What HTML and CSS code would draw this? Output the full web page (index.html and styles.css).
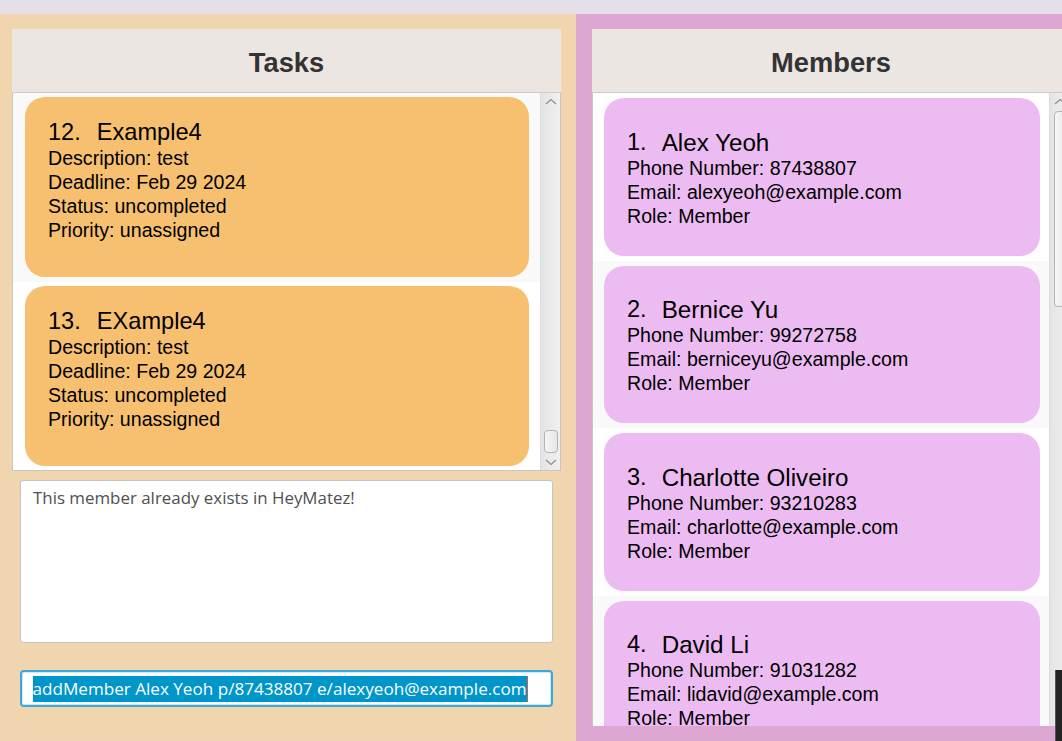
FILE: index.html
```html
<!DOCTYPE html>
<html lang="en">
<head>
<meta charset="utf-8">
<title>HeyMatez</title>
<link rel="stylesheet" href="styles.css">
</head>
<body>
<div class="app">
  <div class="topbar"></div>
  <div class="main">
    <section class="left">
      <div class="panel tasks-panel">
        <div class="panel-header">Tasks</div>
        <div class="list tasks-list">
          <div class="list-body">
            <div class="cell odd">
              <div class="card task-card">
                <div class="card-title"><span class="idx">12.</span><span class="name">Example4</span></div>
                <div class="line">Description: test</div>
                <div class="line">Deadline: Feb 29 2024</div>
                <div class="line">Status: uncompleted</div>
                <div class="line">Priority: unassigned</div>
              </div>
            </div>
            <div class="cell even">
              <div class="card task-card">
                <div class="card-title"><span class="idx">13.</span><span class="name">EXample4</span></div>
                <div class="line">Description: test</div>
                <div class="line">Deadline: Feb 29 2024</div>
                <div class="line">Status: uncompleted</div>
                <div class="line">Priority: unassigned</div>
              </div>
            </div>
          </div>
          <div class="scrollbar">
            <span class="arrow"><svg width="12" height="7" viewBox="0 0 12 7"><polyline points="1,6 6,1.5 11,6" fill="none" stroke="#8c8c8c" stroke-width="1.2"/></svg></span>
            <span class="track track-bottom"><span class="thumb small-thumb"></span></span>
            <span class="arrow"><svg width="12" height="7" viewBox="0 0 12 7"><polyline points="1,1 6,5.5 11,1" fill="none" stroke="#8c8c8c" stroke-width="1.2"/></svg></span>
          </div>
        </div>
      </div>
      <div class="result-display">This member already exists in HeyMatez!</div>
      <div class="command-box"><span class="selection">addMember Alex Yeoh p/87438807 e/alexyeoh@example.com</span><span class="caret"></span></div>
    </section>
    <section class="right">
      <div class="panel members-panel">
        <div class="panel-header">Members</div>
        <div class="list members-list">
          <div class="list-body">
            <div class="cell even">
              <div class="card member-card">
                <div class="card-title"><span class="idx">1.</span><span class="name">Alex Yeoh</span></div>
                <div class="line">Phone Number: 87438807</div>
                <div class="line">Email: alexyeoh@example.com</div>
                <div class="line">Role: Member</div>
              </div>
            </div>
            <div class="cell odd">
              <div class="card member-card">
                <div class="card-title"><span class="idx">2.</span><span class="name">Bernice Yu</span></div>
                <div class="line">Phone Number: 99272758</div>
                <div class="line">Email: berniceyu@example.com</div>
                <div class="line">Role: Member</div>
              </div>
            </div>
            <div class="cell even">
              <div class="card member-card">
                <div class="card-title"><span class="idx">3.</span><span class="name">Charlotte Oliveiro</span></div>
                <div class="line">Phone Number: 93210283</div>
                <div class="line">Email: charlotte@example.com</div>
                <div class="line">Role: Member</div>
              </div>
            </div>
            <div class="cell odd">
              <div class="card member-card">
                <div class="card-title"><span class="idx">4.</span><span class="name">David Li</span></div>
                <div class="line">Phone Number: 91031282</div>
                <div class="line">Email: lidavid@example.com</div>
                <div class="line">Role: Member</div>
              </div>
            </div>
          </div>
          <div class="scrollbar">
            <span class="arrow"><svg width="12" height="7" viewBox="0 0 12 7"><polyline points="1,6 6,1.5 11,6" fill="none" stroke="#8c8c8c" stroke-width="1.2"/></svg></span>
            <span class="track track-top"><span class="thumb big-thumb"></span></span>
          </div>
        </div>
      </div>
    </section>
  </div>
  <div class="window-edge"></div>
</div>
</body>
</html>
```
FILE: styles.css
```css
* { box-sizing: border-box; }

html, body {
  margin: 0;
  padding: 0;
  width: 1062px;
  height: 741px;
  overflow: hidden;
  background: #e5dfe9;
  font-family: "Liberation Sans", Arial, sans-serif;
}

.app {
  position: relative;
  width: 1062px;
  height: 741px;
  display: flex;
  flex-direction: column;
}

.topbar {
  height: 14px;
  flex: none;
  background: #e5dfe9;
}

.main {
  flex: 1;
  display: flex;
  min-height: 0;
}

.left {
  width: 576px;
  flex: none;
  background: #f1d5ae;
  padding: 15px 15px 0 12px;
  display: flex;
  flex-direction: column;
}

.right {
  flex: 1;
  background: #dea6d2;
  padding: 15px 0 0 16px;
  overflow: hidden;
}

.panel {
  display: flex;
  flex-direction: column;
}

.tasks-panel { width: 549px; }
.members-panel { width: 478px; }

.panel-header {
  height: 64px;
  background: #ebe6e2;
  border-bottom: 1px solid #cdcaca;
  display: flex;
  align-items: center;
  justify-content: center;
  font-weight: bold;
  font-size: 27.3px;
  color: #333333;
  padding-top: 4px;
}

.list {
  display: flex;
  background: #ffffff;
  border: 1px solid #c6c6c6;
  border-top: none;
  overflow: hidden;
}

.tasks-list { height: 378px; }
.members-list { height: 633px; border-bottom: none; }

.list-body {
  flex: 1;
  min-width: 0;
}

.cell.odd { background: #f9f9f9; }
.cell.even { background: #ffffff; }

.tasks-list .cell {
  height: 188.5px;
  padding: 4px 11px 0 12px;
}

.members-list .cell {
  height: 167.5px;
  padding: 5px 9px 0 11px;
}

.card {
  border-radius: 20px;
  color: #000000;
  padding-left: 23px;
}

.task-card {
  height: 180px;
  background: #f6c070;
  padding-top: 22px;
}

.member-card {
  height: 157.5px;
  background: #ecbbf2;
  padding-top: 30.5px;
  padding-left: 23px;
}

.card-title {
  display: flex;
  gap: 16px;
  font-size: 23.6px;
  line-height: 27px;
  height: 27px;
}

.member-card .card-title { gap: 15px; }
.member-card .name { font-size: 24.2px; }

.line {
  font-size: 19.6px;
  line-height: 24px;
  white-space: nowrap;
}

.scrollbar {
  width: 20px;
  flex: none;
  background: linear-gradient(to right, #e4e4e4, #f0f0f0);
  border-left: 1px solid #dcdcdc;
  display: flex;
  flex-direction: column;
  align-items: center;
}

.arrow {
  height: 16px;
  display: flex;
  align-items: center;
  justify-content: center;
  flex: none;
}

.track {
  flex: 1;
  width: 100%;
  display: flex;
  flex-direction: column;
  align-items: center;
}

.track-bottom { justify-content: flex-end; padding-bottom: 1px; }
.track-top { justify-content: flex-start; padding-top: 2px; }

.thumb {
  width: 14px;
  border: 1px solid #b4b4b4;
  border-radius: 4px;
  background: linear-gradient(to right, #f6f6f6, #e6e6e6);
}

.small-thumb { height: 23px; }
.big-thumb { height: 196px; margin-left: 3px; }

.members-list .scrollbar { width: 20px; align-items: flex-start; padding-left: 0; }
.members-list .arrow { padding-left: 4px; }

.result-display {
  margin: 9px 0 0 8px;
  width: 533px;
  height: 163px;
  background: #ffffff;
  border: 1px solid #c4c4c4;
  border-radius: 3px;
  padding: 5px 12px 0 12px;
  font-family: "Open Sans", "Noto Sans", sans-serif;
  font-size: 16.9px;
  line-height: 24px;
  color: #505050;
}

.command-box {
  margin: 27px 0 0 8px;
  width: 533px;
  height: 37px;
  background: #ffffff;
  border: 2px solid #3aa8dc;
  border-radius: 4px;
  box-shadow: inset 0 0 0 1px #cfeaf7;
  padding: 4px 0 0 10.5px;
  display: flex;
  align-items: flex-start;
}

.selection {
  display: inline-block;
  height: 26px;
  line-height: 26px;
  background: #0096c9;
  color: #ffffff;
  font-family: "Open Sans", "Noto Sans", sans-serif;
  font-size: 17.1px;
  white-space: nowrap;
}

.caret {
  display: inline-block;
  width: 1px;
  height: 26px;
  background: #e0584a;
}

.window-edge {
  position: absolute;
  right: 0;
  top: 670px;
  width: 7px;
  height: 71px;
  background: #232323;
  border-left: 1px solid #555;
}
```
